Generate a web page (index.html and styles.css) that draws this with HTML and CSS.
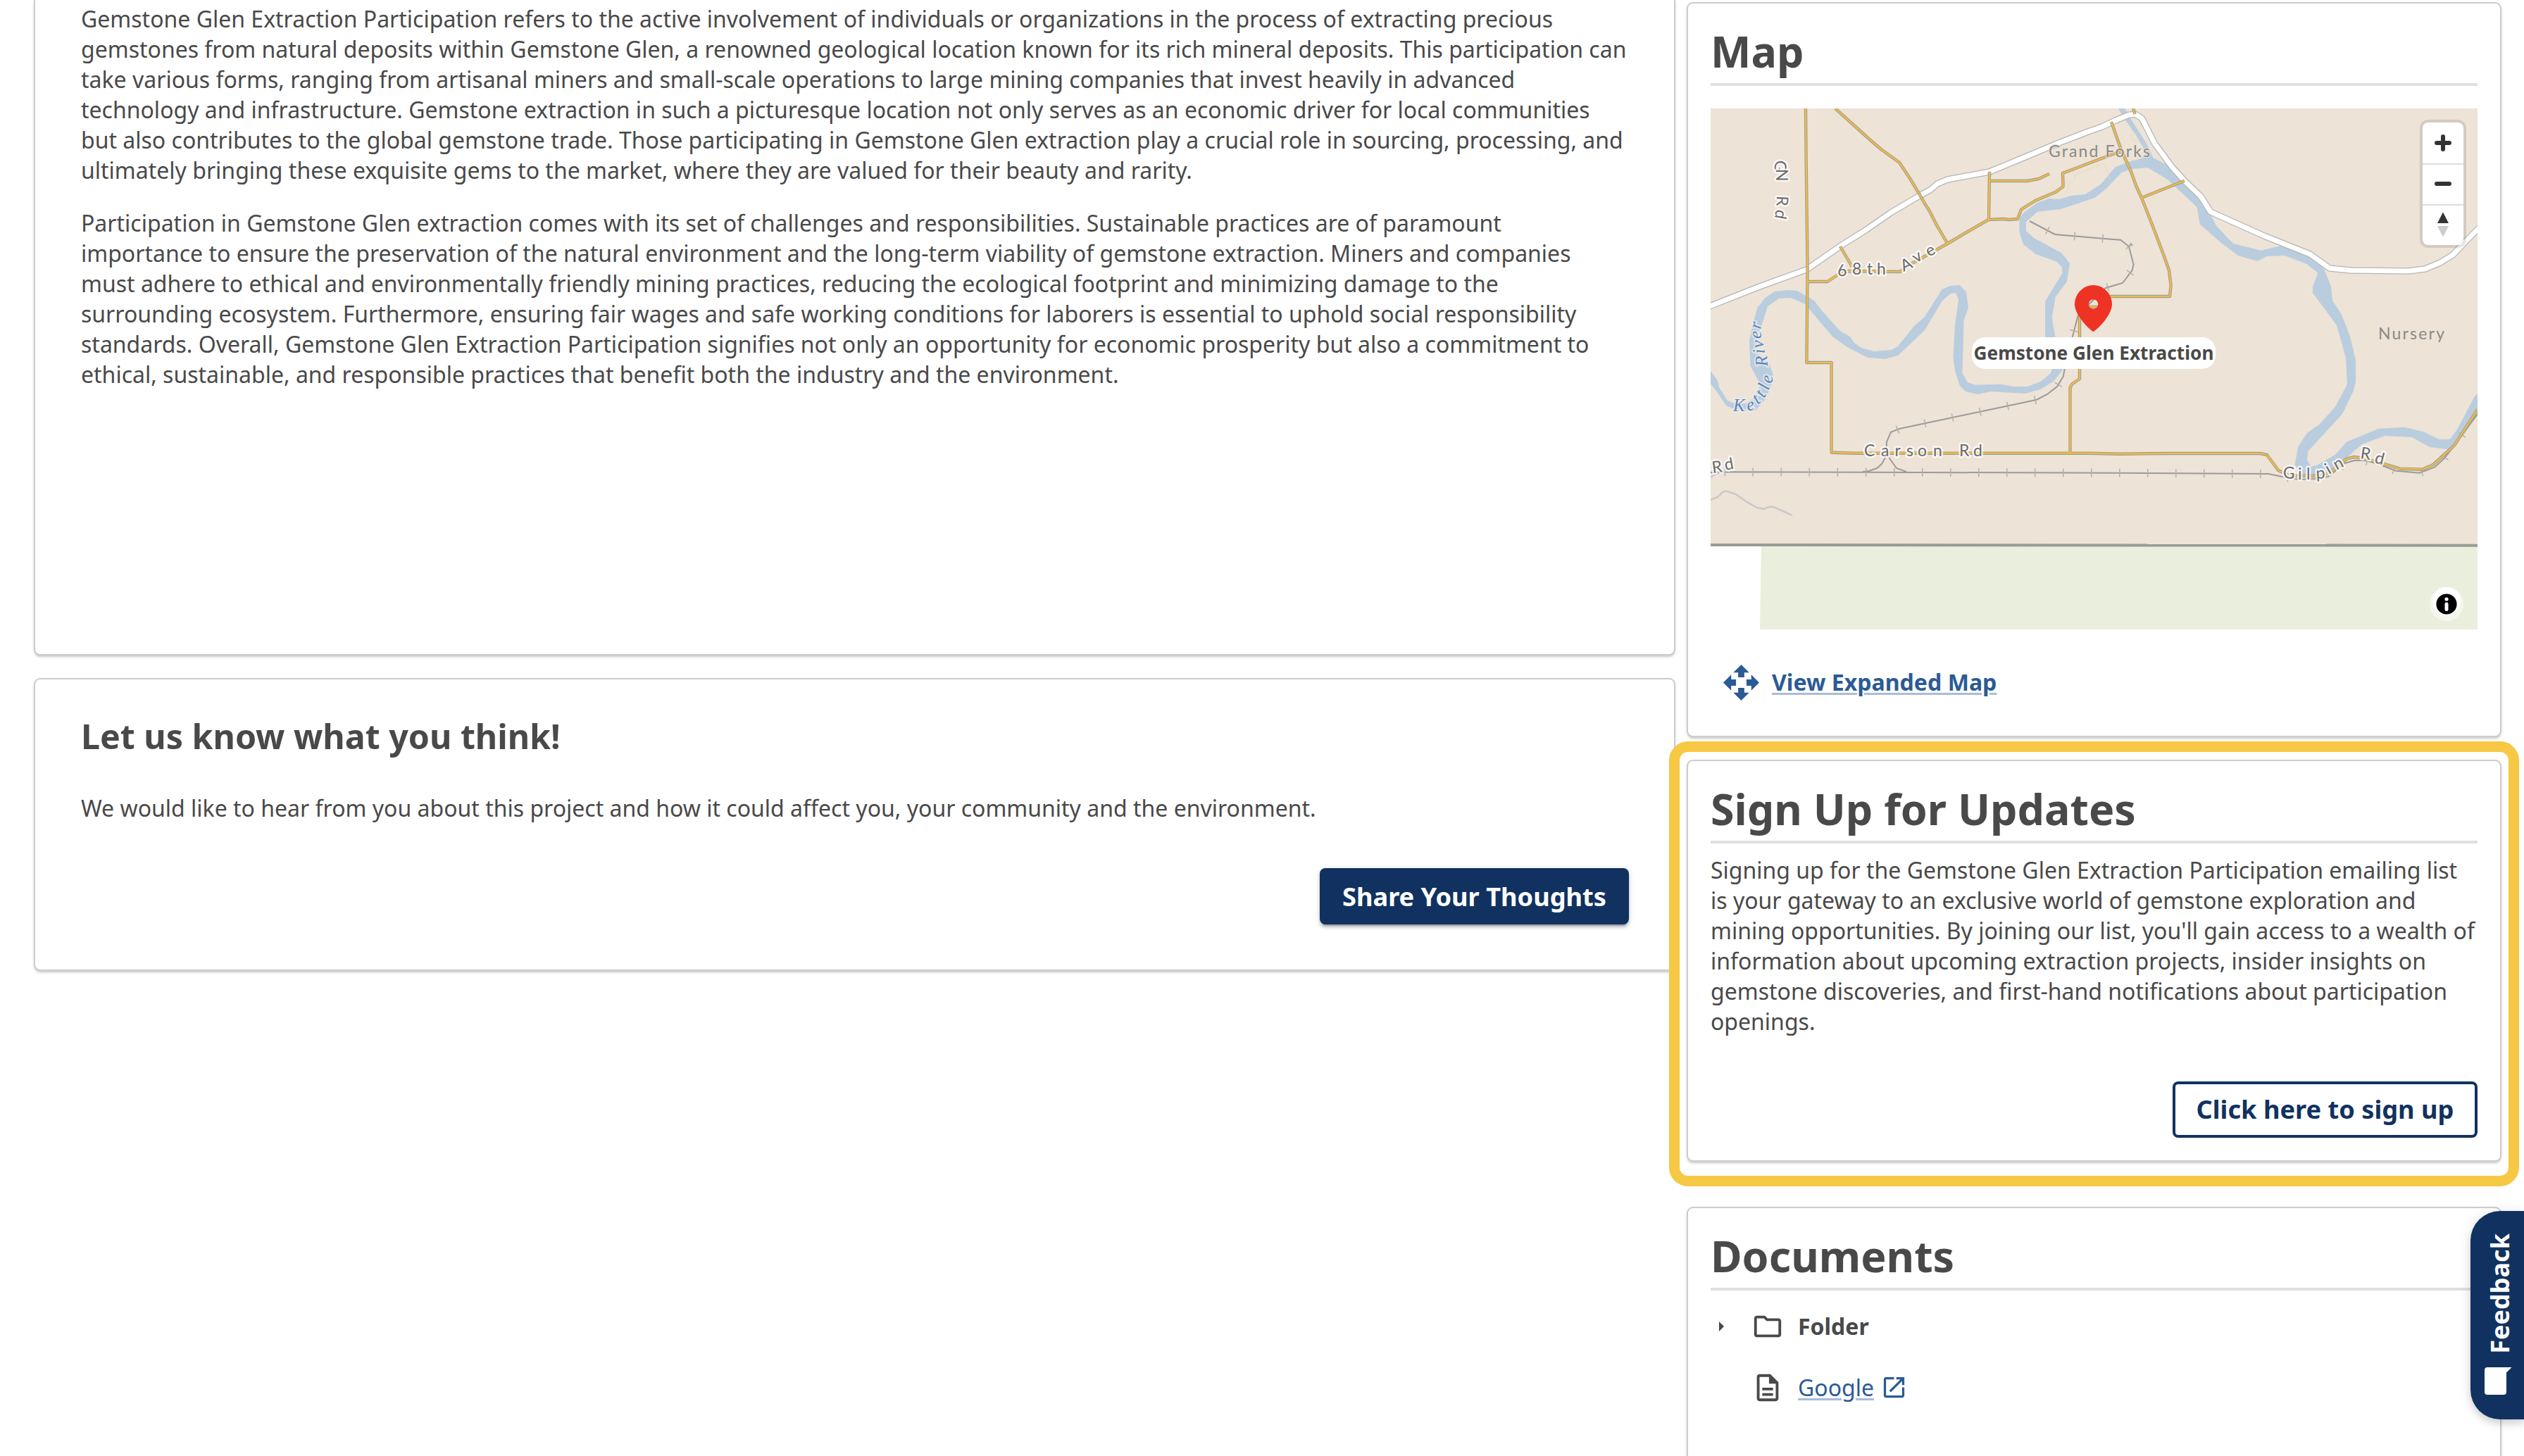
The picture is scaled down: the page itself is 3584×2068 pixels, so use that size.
FILE: index.html
```html
<!DOCTYPE html>
<html lang="en">
<head>
<meta charset="utf-8">
<title>Gemstone Glen Extraction Participation</title>
<link rel="stylesheet" href="styles.css">
</head>
<body>
<div class="page">
  <main class="main-col">
    <section class="card card--intro">
      <p>Gemstone Glen Extraction Participation refers to the active involvement of individuals or organizations in the process of extracting precious gemstones from natural deposits within Gemstone Glen, a renowned geological location known for its rich mineral deposits. This participation can take various forms, ranging from artisanal miners and small-scale operations to large mining companies that invest heavily in advanced technology and infrastructure. Gemstone extraction in such a picturesque location not only serves as an economic driver for local communities but also contributes to the global gemstone trade. Those participating in Gemstone Glen extraction play a crucial role in sourcing, processing, and ultimately bringing these exquisite gems to the market, where they are valued for their beauty and rarity.</p>
      <p>Participation in Gemstone Glen extraction comes with its set of challenges and responsibilities. Sustainable practices are of paramount importance to ensure the preservation of the natural environment and the long-term viability of gemstone extraction. Miners and companies must adhere to ethical and environmentally friendly mining practices, reducing the ecological footprint and minimizing damage to the surrounding ecosystem. Furthermore, ensuring fair wages and safe working conditions for laborers is essential to uphold social responsibility standards. Overall, Gemstone Glen Extraction Participation signifies not only an opportunity for economic prosperity but also a commitment to ethical, sustainable, and responsible practices that benefit both the industry and the environment.</p>
    </section>
    <section class="card card--think">
      <h2 class="think-title">Let us know what you think!</h2>
      <p>We would like to hear from you about this project and how it could affect you, your community and the environment.</p>
      <button class="btn btn--primary">Share Your Thoughts</button>
    </section>
  </main>

  <aside class="side-col">
    <section class="card side-card side-card--map">
      <h2 class="side-title">Map</h2>
      <div class="map">
        <svg class="map-canvas" viewBox="0 0 1089 740">
          <rect class="land" width="1089" height="620"/>
          <path class="green" d="M72 620H1089V740H70Z"/>
          <path class="river" d="M0 373L9.5 386 12 396 24 415 36 420 50 419 62 411 70 394 68 387 56.6 366 55 329 61 303 66.5 283 77.5 269 91 260 111 258 123 259 147 273 158.6 288 185 317 198 324 204 333 214 340 232 345 257 343 266 338 289 309 304 296 328.6 257 340 252 354 251 363 261 366 283 359.5 301 357.5 376 365 389 376 392.7 412 391.7 429.5 395 450 395 469 387.7 483 376 485 369 481 336 475 324V274L491 247.7 499.5 234 498.6 225 491.5 217.7 461 206.7 444 192.7 438.5 176V156L445 147.7 464 133.7 481 128 495 129 512.5 123.7 532 122 554 107.7 575 83 596.7 75 612.6 71 619 64 604.6 39 588.7 16 579 0H588L600.6 21 618.5 49 628.5 70 646 79 672 104 708 146 718 166.7 742 192 781.7 201.7 809.5 195 849 207.7 871 227.7 881 253 883 272.7 896 292.7 908 324 916 357.7V387.7L913 401 897 434 848.5 486.7 847 499 852.5 509 861 506.7 887 491.7 903 473.7 948 455 984.6 452.7 1011.7 459 1035 470 1050 469.7 1060 456 1085 409 1089 405V429L1055.5 479 1046 484 1021 481 996 467 957.6 465 925 477 901 497.7 869 522.7 841 523 829.5 506 834.6 480 847 461 864.5 448.7 887 424 904 391.7 902 354 889 308 855 262V252.7L862.5 233.7 846.6 221 815 209 789.7 210 776 217 748.7 208.7 725 191 694.5 164 690.6 140 649 101 620.5 84 596.7 86 583.5 91 562 113.7 546 126.7 498.6 142.7 464 146.7 448 161V174L459 184 498 205 510 220 506 246 489.6 267.7 485 296 486 306 489.5 324 505 350 500 371 487 387.7 469 398.7 447 405 398 402 379 406 362 402 354 394 347 372.7 344.5 352.7 347 307.7 352 271 348 262 340.5 263 328.6 273.7 304 315 266 351 247.6 356 222.6 353.7 194 339 173 324 141 286 137 279 114 269 97 270 81 281 77 294 67.6 323 64 346 81.5 359 89 378 85.5 396 77.5 413 64 429 36 428 22 422 10 404 0 391Z"/>
          <path class="contour" d="M0 556L10 552 17 545 Q20 543 24 544L36 548 50 558 66 567 75.6 569 Q83 565 89 566L116 578M0 524L10 518 20 515"/>
          <path class="lot" d="M505 121L509 108 517 101V94L559 78 567 100M596 38L603 36 607 44 600 47Z"/>
          <g id="rail" class="rail">
            <path d="M0 517L32 516.3 216 516.7 571 517.7 792 519 810 522.7 835 527 859 526 877 523 901 503.7 914 500H929L945 504 973 514.7 1006.5 517.7 1028 509.7 1042 496.7 1056 479 1089 434"/>
            <path d="M453 160L489 179 571 186 582 186.7 594 196 600.6 221.7 598.6 230 585 248 561 255 522 293 514 324 502.6 371 500.6 381 492 395 478 406 463 413.7 268 455 256 459.7 250 473.7 249 494 243 505 236 511 225 515 216 516M252 494L264 511 278 516"/>
          </g>
          <g class="rail-ties">
            <path d="M19.5 516.3L216 516.7"/>
            <path d="M220 516.7L571 517.7 792 519 810 522.7 835 527 859 526 877 523 901 503.7 914 500H929L945 504 973 514.7 1006.5 517.7 1028 509.7 1042 496.7 1056 479 1089 434"/>
            <path stroke-dashoffset="-28" d="M453 160L489 179 571 186 582 186.7 594 196 600.6 221.7 598.6 230 585 248 561 255"/>
            <path stroke-dashoffset="-23" d="M522 293L514 324 502.6 371 500.6 381 492 395 478 406 463 413.7 268 455 256 459.7 250 473.7 249 494"/>
          </g>
          <g class="hwy">
            <path class="hwy-case" d="M-4 282L69.6 253 136 229 188 193 220 173 256 148 295 125 313 115 322 107 336.5 101 396 90 437 73 497 48 536 33 556 26 575 17 593 9.5 602.6 8 612 13.7 616.5 22 630 49 655 83 674 104 696 125 710 147 786 181 851 207 879 227 909 230 991 231 1014.5 228 1036 219 1054 208 1070 191 1092 169"/>
            <path class="hwy-fill" d="M-4 282L69.6 253 136 229 188 193 220 173 256 148 295 125 313 115 322 107 336.5 101 396 90 437 73 497 48 536 33 556 26 575 17 593 9.5 602.6 8 612 13.7 616.5 22 630 49 655 83 674 104 696 125 710 147 786 181 851 207 879 227 909 230 991 231 1014.5 228 1036 219 1054 208 1070 191 1092 169"/>
          </g>
          <defs>
            <path id="roads" d="M135 0L135.7 79 137.6 226 136.4 361H171.6V488.7L204 489.7H536L568 490.5 581 490.7 650 490H780L790 492 806 514 823.5 522H869L885 512.7 903 497.7 914 495 929 497 979 511.7 1010.5 512.7 1026 506 1056 478.7 1089 427.7M177 0L228 46 243 58.7 268 76.7 284 101 297 122.7 304 135 311 146 321.5 166.7 336.5 192M138 246H166L184 234 196 231 269 232 279 224 336.5 192 365 175 394.6 158 416 157 424 158 436 157 441 143.7 461 131 489.5 119 500.6 111 500 92 571 65 583 61.7M184 196L201 225M396 90L395 158M396 103H449L466 100 481 92.7M569 19L583 59 596.7 89 604.6 111 612 127 628.5 169 643.6 209 651 230 653.6 251 652 267H566L555 282H524V384L513 391.7 510.5 396.7V489.7M612 127L673 102.7M600 0L602.6 8"/>
          </defs>
          <use href="#roads" class="road-case"/>
          <use href="#roads" class="road-fill"/>
          <path class="border-line" d="M0 620L1089 620.7"/>

          <g class="map-label">
            <text transform="translate(92 73) rotate(96)">G</text>
            <text transform="translate(93 86) rotate(90)">N</text>
            <text transform="translate(94 124) rotate(92)">R</text>
            <text transform="translate(93 143) rotate(100)">d</text>
            <text x="181 201 222 236" y="239 236 236 236" rotate="-8 0 0 0">68th</text>
            <text x="274 292 310" y="232 220 211" rotate="-25 -32 -28">Ave</text>
            <text x="218 242 261.6 278 294 316 353 373" y="494">CarsonRd</text>
            <text x="3 21" y="518 514" rotate="-8 -10">Rd</text>
            <text x="812.5 834 846 860 878 889 922 942" y="525 527 526.6 526 520 514 497 503" rotate="3 0 0 -3 -30 -28 8 14">GilpinRd</text>
          </g>
          <g class="map-place">
            <text class="halo" x="480" y="69" textLength="144">Grand Forks</text>
            <text x="948" y="328" textLength="94">Nursery</text>
          </g>
          <text class="map-water" x="32 53 67 76 82 87 81 77 75 72 71" y="430 430 421 412 401 391 366 348 340 327 314" rotate="0 -15 -40 -60 -70 -82 -94 -94 -92 -90 -80">KettleRiver</text>

          <path class="pin" fill-rule="evenodd" d="M543.5 317C541.5 317 517 295 517 278A26.5 27 0 0 1 570 278C570 295 545.500 317 543.5 317ZM543.5 271.200A6.8 6.8 0 1 0 543.5 284.800A6.8 6.8 0 1 0 543.5 271.200Z"/>
        </svg>
        <div class="pin-label">Gemstone Glen Extraction</div>
        <div class="map-ctrl">
          <button class="ctrl-btn" aria-label="Zoom in"><svg viewBox="0 0 58 58"><path d="M29 20V38M20 29H38" class="ctrl-stroke"/></svg></button>
          <button class="ctrl-btn" aria-label="Zoom out"><svg viewBox="0 0 58 58"><path d="M20 29H38" class="ctrl-stroke"/></svg></button>
          <button class="ctrl-btn" aria-label="Reset bearing"><svg viewBox="0 0 58 58"><path d="M21 27L29 11.500 37 27Z" fill="#333"/><path d="M21 31L29 46.500 37 31Z" fill="#ccc"/></svg></button>
        </div>
        <button class="map-info" aria-label="Attribution"><svg viewBox="0 0 48 48"><circle cx="24" cy="19.500" r="20" fill="#fff"/><circle cx="24" cy="24" r="14.600"/><circle cx="24" cy="17" r="2.600" fill="#fff"/><rect x="21.500" y="21.500" width="5" height="12.500" rx="2.300" fill="#fff"/></svg></button>
      </div>
      <div class="expand">
        <svg viewBox="-25 -25 50 50"><path d="M0-25L11-14H4.300V-7.300H-4.300V-14H-11ZM0 25L11 14H4.300V7.300H-4.300V14H-11ZM-25 0L-14-11V-4.300H-7.300V4.300H-14V11ZM25 0L14-11V-4.300H7.300V4.300H14V11Z"/></svg>
        <a class="link link--bold">View Expanded Map</a>
      </div>
    </section>

    <section class="card side-card side-card--signup">
      <h2 class="side-title">Sign Up for Updates</h2>
      <p>Signing up for the Gemstone Glen Extraction Participation emailing list is your gateway to an exclusive world of gemstone exploration and mining opportunities. By joining our list, you'll gain access to a wealth of information about upcoming extraction projects, insider insights on gemstone discoveries, and first-hand notifications about participation openings.</p>
      <button class="btn btn--outline">Click here to sign up</button>
    </section>

    <section class="card side-card side-card--docs">
      <h2 class="side-title">Documents</h2>
      <ul class="docs">
        <li class="doc-row">
          <svg class="caret" viewBox="0 0 7 14"><path d="M0 0L7 7 0 14Z"/></svg>
          <svg class="doc-icon" viewBox="0 0 24 24"><path d="M9.170 6l2 2H20v10H4V6h5.170M10 4H4c-1.100 0-1.990.9-1.990 2L2 18c0 1.100.9 2 2 2h16c1.100 0 2-.9 2-2V8c0-1.100-.9-2-2-2h-8l-2-2z"/></svg>
          <span class="folder-name">Folder</span>
        </li>
        <li class="doc-row">
          <span class="caret"></span>
          <svg class="doc-icon" viewBox="0 0 24 24"><path d="M8 16h8v2H8zm0-4h8v2H8zm6-10H6c-1.100 0-2 .9-2 2v16c0 1.100.890 2 1.990 2H18c1.100 0 2-.9 2-2V8l-6-6zm4 18H6V4h7v5h5v11z"/></svg>
          <a class="link">Google</a>
          <svg class="ext-icon" viewBox="0 0 24 24"><path d="M19 19H5V5h7V3H5c-1.110 0-2 .9-2 2v14c0 1.100.890 2 2 2h14c1.100 0 2-.9 2-2v-7h-2v7zM14 3v2h3.590l-9.830 9.830 1.410 1.410L19 6.410V10h2V3h-7z"/></svg>
        </li>
      </ul>
    </section>
  </aside>
</div>

<button class="feedback">
  <svg viewBox="0 0 39 39"><path d="M4 0H38.500L31 7.500V35Q31 39 27 39H4Q0 39 0 35V4Q0 0 4 0Z"/></svg>
  <span>Feedback</span>
</button>
</body>
</html>
```
FILE: styles.css
```css
* { box-sizing: border-box; }

body {
  margin: 0;
  height: 2068px;
  overflow: hidden;
  background: #fff;
  color: #494949;
  font: 400 32px/43px "Noto Sans", sans-serif;
}

h2, p, ul { margin: 0; padding: 0; }
button { padding: 0; border: 0; font-family: inherit; }
svg { display: block; flex: none; }

.page {
  display: flex;
  align-items: flex-start;
  gap: 16px;
  height: 2068px;
  padding-left: 48px;
  overflow: hidden;
}

.main-col { width: 2331px; display: flex; flex-direction: column; gap: 32px; }
.side-col { width: 1157px; display: flex; flex-direction: column; gap: 32px; padding-top: 3px; }

.card {
  background: #fff;
  border: 2px solid #ccc;
  border-radius: 9px;
  box-shadow: 0 3px 3px -1px rgba(0,0,0,.14), 0 2px 5px rgba(0,0,0,.09);
}

/* left column */
.card--intro {
  height: 931px;
  padding: 5px 64px 0 65px;
  border-top: 0;
  border-radius: 0 0 9px 9px;
}
.card--intro p + p { margin-top: 32px; }

.card--think {
  display: flex;
  flex-direction: column;
  height: 416px;
  padding: 47px 64px 0 65px;
}
.think-title { font-size: 48.3px; line-height: 66px; margin-bottom: 48px; }

.btn {
  align-self: flex-end;
  height: 80px;
  border-radius: 8px;
  font-size: 36.2px;
  font-weight: 700;
  line-height: 49px;
}
.btn--primary {
  width: 439px;
  margin-top: 64px;
  background: #113260;
  color: #fff;
  box-shadow: 0 6px 2px -4px rgba(0,0,0,.2), 0 4px 4px rgba(0,0,0,.18), 0 2px 10px rgba(0,0,0,.12);
}
.btn--outline {
  width: 433px;
  margin-top: 64px;
  padding-bottom: 2px;
  background: #fff;
  border: 4px solid #113260;
  color: #113260;
}

/* right column */
.side-card { display: flex; flex-direction: column; padding: 26px 32px 0; }
.side-title {
  padding-bottom: 4px;
  border-bottom: 4px solid #e0e0e0;
  font-size: 60.95px;
  line-height: 83px;
}
.side-card--map { height: 1044px; }
.side-card--signup { position: relative; height: 571px; }
.side-card--signup p { margin-top: 16px; }
.side-card--signup::after {
  content: "";
  position: absolute;
  inset: -28px -27px -37px -27px;
  border: 15px solid #f7c843;
  border-radius: 27px;
  pointer-events: none;
}
.side-card--docs { height: 400px; margin-top: 32px; }

/* map */
.map { position: relative; height: 740px; margin-top: 32px; overflow: hidden; }
.map-canvas { width: 1089px; height: 740px; }
.land { fill: #ede3d6; }
.green { fill: #eaeedd; }
.river { fill: #b9cddf; }
.contour { fill: none; stroke: #c8c8c8; stroke-width: 2.4; }
.lot { fill: none; stroke: #efd9bd; stroke-width: 1; }
.rail { fill: none; stroke: #9b9b9b; stroke-width: 2; }
.rail-ties { fill: none; stroke: #b5b0a8; stroke-width: 12; stroke-dasharray: 1.5 38.5; }
.hwy, .road-case, .road-fill { fill: none; stroke-linejoin: round; }
.hwy-case { stroke: #b5b5b5; stroke-width: 9.5; }
.hwy-fill { stroke: #fff; stroke-width: 7; }
.road-case { stroke: #9f9f97; stroke-width: 4.4; }
.road-fill { stroke: #f3bb3f; stroke-width: 2.2; }
.border-line { stroke: #9a9b95; stroke-width: 4; }

.map-label, .map-place { font-family: Lato, sans-serif; font-size: 23px; }
.map-label { fill: #6b6b6b; }
.map-label text, .halo {
  paint-order: stroke;
  stroke: rgba(255,255,255,.8);
  stroke-width: 5px;
  stroke-linejoin: round;
}
.map-place { fill: #898989; }
.map-place .halo { stroke: rgba(237,227,214,.7); stroke-width: 3px; }
.map-water {
  fill: #5c83bd;
  font: italic 25px "Liberation Serif", serif;
  paint-order: stroke;
  stroke: rgba(237,236,232,.8);
  stroke-width: 4px;
}
.pin { fill: #ee3224; }

.pin-label {
  position: absolute;
  left: 371px;
  top: 325px;
  width: 346px;
  height: 45px;
  border-radius: 19px;
  background: #fff;
  font-size: 26.2px;
  font-weight: 700;
  line-height: 45px;
  text-align: center;
  white-space: nowrap;
}

.map-ctrl {
  position: absolute;
  top: 20px;
  right: 20px;
  width: 58px;
  border-radius: 8px;
  background: #fff;
  box-shadow: 0 0 0 4px rgba(0,0,0,.1);
}
.ctrl-btn { display: block; width: 58px; height: 58px; background: none; }
.ctrl-btn + .ctrl-btn { border-top: 2px solid #ddd; }
.ctrl-btn + .ctrl-btn svg { margin-top: -2px; }
.ctrl-stroke { fill: none; stroke: #333; stroke-width: 6; stroke-linecap: round; }

.map-info {
  position: absolute;
  right: 20px;
  bottom: 12px;
  width: 48px;
  height: 48px;
  border-radius: 24px;
  background: rgba(255,255,255,.5);
}

.expand { display: flex; align-items: center; gap: 18px; margin: 50px 0 0 18px; height: 51px; }
.expand svg { width: 51px; height: 51px; fill: #2b5b95; }
.expand .link { margin-bottom: 2px; font-size: 32.1px; }

.link {
  color: #2b5b95;
  text-decoration: underline;
  text-decoration-color: #a9bcd8;
  text-decoration-thickness: 3px;
  text-underline-offset: 3px;
}
.link--bold { font-weight: 700; }

/* documents */
.docs { list-style: none; margin-top: 29px; display: flex; flex-direction: column; gap: 44px; }
.doc-row { display: flex; align-items: center; height: 43px; padding-left: 12px; }
.caret { width: 7px; height: 14px; margin-right: 39px; fill: #494949; }
.doc-icon { width: 46px; height: 46px; margin-right: 20px; fill: #494949; }
.folder-name { font-weight: 700; }
.ext-icon { width: 39px; height: 39px; margin-left: 9px; fill: #2b5b95; }

/* floating feedback tab */
.feedback {
  position: absolute;
  right: 0;
  top: 1720px;
  width: 76px;
  height: 296px;
  display: flex;
  flex-direction: column-reverse;
  align-items: flex-start;
  gap: 19px;
  padding: 0 0 35px 20px;
  border-radius: 42px 0 0 42px;
  background: #113260;
  color: #fff;
  font-size: 36px;
  font-weight: 700;
  line-height: 44px;
  box-shadow: 0 6px 10px rgba(0,0,0,.12), 0 2px 20px rgba(0,0,0,.1);
}
.feedback svg { width: 39px; height: 39px; fill: #fff; }
.feedback span { writing-mode: vertical-rl; transform: rotate(180deg); }
```
